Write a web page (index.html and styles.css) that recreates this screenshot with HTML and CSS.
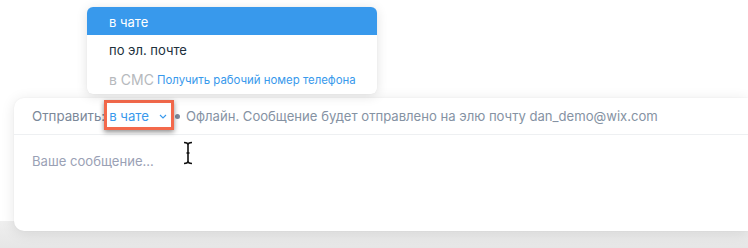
FILE: index.html
```html
<!DOCTYPE html>
<html lang="ru">
<head>
<meta charset="utf-8">
<link rel="stylesheet" href="styles.css">
</head>
<body>
<div class="stage">
  <div class="card">
    <div class="card-head">
      <span class="label">Отправить:</span>
      <span class="select">
        <span class="select-value">в чате</span>
        <svg class="chev" width="8" height="5" viewBox="0 0 8 5"><path d="M1 1l3 3 3-3" fill="none" stroke="#3899ec" stroke-width="1.1"/></svg>
        <span class="highlight"></span>
      </span>
      <span class="dot"></span>
      <span class="status">Офлайн. Сообщение будет отправлено на элю почту dan_demo@wix.com</span>
    </div>
    <div class="card-body">
      <span class="placeholder">Ваше сообщение...</span>
      <svg class="ibeam" width="10" height="24" viewBox="0 0 10 24"><path d="M1 1.5c2 0 4 .5 4 2.5v16c0 2-2 2.5-4 2.5M9 1.5c-2 0-4 .5-4 2.5v16c0 2 2 2.5 4 2.5M3.5 12h3" fill="none" stroke="#111" stroke-width="1.6"/></svg>
    </div>
  </div>
  <div class="floor"></div>

  <ul class="menu">
    <li class="item active">в чате</li>
    <li class="item">по эл. почте</li>
    <li class="item disabled"><span class="sms">в СМС</span><a class="link">Получить рабочий номер телефона</a></li>
  </ul>
</div>
</body>
</html>
```

FILE: styles.css
```css
* { box-sizing: border-box; }
html, body { margin: 0; padding: 0; }
body {
  width: 748px;
  height: 248px;
  overflow: hidden;
  background: #ffffff;
  font-family: Inter, "Noto Sans", sans-serif;
}
.stage {
  position: relative;
  height: 248px;
  display: flex;
  flex-direction: column;
}
.card {
  margin: 98px 0 0 14px;
  height: 133px;
  background: #fff;
  border-radius: 10px 0 0 10px;
  box-shadow: 0 2px 14px rgba(0, 0, 0, 0.10), 0 0 2px rgba(0,0,0,0.05);
  position: relative;
  z-index: 1;
}
.card-head {
  height: 37px;
  border-bottom: 1px solid #eef0f2;
  display: flex;
  align-items: center;
  padding-left: 18px;
  font-size: 13.2px;
  color: #7b8899;
}
.label { font-size: 13.3px; }
.select {
  position: relative;
  display: flex;
  align-items: center;
  color: #3899ec;
  padding-left: 4px;
}
.select-value { margin-right: 10px; }
.chev { margin-top: 1px; }
.highlight {
  position: absolute;
  left: -1px;
  top: -8px;
  width: 70px;
  height: 30px;
  border: 3px solid #f3694b;
  box-shadow: 0 2px 5px rgba(0,0,0,0.45);
}
.dot {
  width: 5px;
  height: 5px;
  border-radius: 50%;
  background: #7d8a9b;
  margin: 0 6px 0 8px;
}
.status { color: #8592a3; font-size: 13.1px; }
.card-body {
  display: flex;
  align-items: flex-start;
  padding: 18px 18px;
}
.placeholder {
  font-size: 13.1px;
  color: #9aa1b5;
}
.ibeam { margin: -12px 0 0 29px; }
.floor {
  flex: 1;
  background: linear-gradient(#efefef, #e6e6e6);
  margin-top: -10px;
}
.menu {
  position: absolute;
  left: 87px;
  top: 7px;
  width: 290px;
  margin: 0;
  padding: 0 0 1px;
  list-style: none;
  background: #fff;
  border-radius: 6px;
  box-shadow: 0 2px 12px rgba(0,0,0,0.12), 0 0 1px rgba(0,0,0,0.08);
  overflow: hidden;
  z-index: 2;
}
.item {
  height: 29px;
  display: flex;
  align-items: center;
  padding: 1px 0 0 22px;
  font-size: 13px;
  color: #20303c;
}
.item.active {
  height: 28px;
  padding-top: 2px;
  background: #3899ec;
  color: #fff;
}
.item.disabled { color: #b6b9bd; padding-top: 2px; }
.sms { font-size: 14px; }
.link {
  color: #3899ec;
  font-size: 11.4px;
  margin-left: 3px;
}
```
